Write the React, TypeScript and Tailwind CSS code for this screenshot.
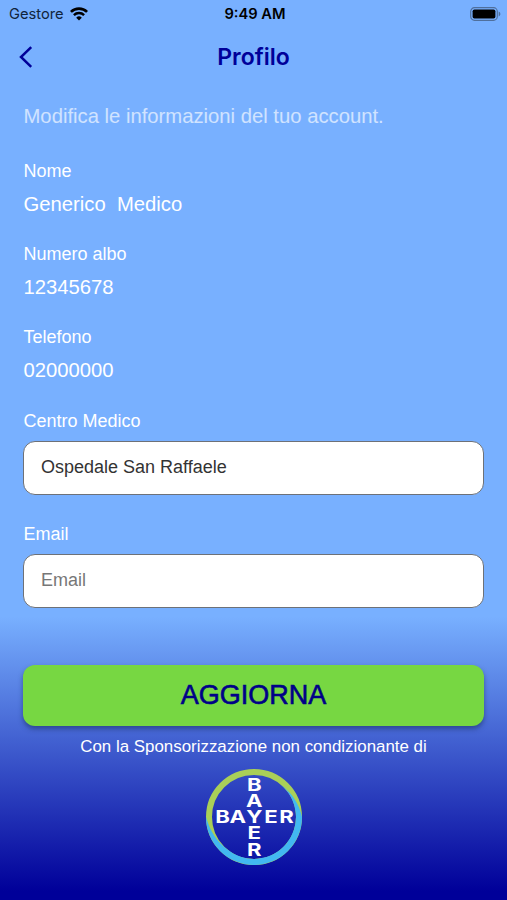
import React from "react";

interface Field {
  label: string;
  value: string;
}

const fields: Field[] = [
  { label: "Nome", value: "Generico  Medico" },
  { label: "Numero albo", value: "12345678" },
  { label: "Telefono", value: "02000000" },
];

const WifiIcon: React.FC = () => (
  <svg className="ml-[6px] h-[14px] w-[18px]" viewBox="0 0 18 14" fill="none" stroke="#000">
    <path d="M0.9 4.9a11.5 11.5 0 0 1 16.2 0" strokeWidth="2.7" />
    <path d="M3.9 8.1a7.2 7.2 0 0 1 10.2 0" strokeWidth="2.4" />
    <path d="M9 13.6 6.2 10.7a4 4 0 0 1 5.6 0z" fill="#000" stroke="none" />
  </svg>
);

const BatteryIcon: React.FC = () => (
  <svg className="h-[14px] w-[31px]" viewBox="0 0 31 14">
    <rect x="0.7" y="0.7" width="26.6" height="12.6" rx="3.8" fill="none" stroke="#4f6f9c" strokeWidth="1.2" />
    <rect x="2.6" y="2.4" width="22.8" height="9.2" rx="1.8" fill="#000" />
    <path d="M28.7 4.6c2.2.8 2.2 4 0 4.8z" fill="#4f6f9c" />
  </svg>
);

const logoLetters = [
  { char: "B", x: -31.5, y: -26 },
  { char: "A", x: -16.3, y: -10 },
  { char: "Y", x: 0.3, y: 6 },
  { char: "E", x: 17, y: 22 },
  { char: "R", x: 32.5, y: 38.7 },
];

// Croix Bayer : anneau vert et bleu, lettres horizontales et verticales
const BayerLogo: React.FC = () => (
  <svg
    className="h-24 w-24"
    viewBox="-48 -48 96 96"
    fill="#fff"
    fontFamily="Inter, sans-serif"
    fontWeight="700"
    fontSize="17.3"
    textAnchor="middle"
  >
    <circle r="45" fill="none" stroke="#a9cf58" strokeWidth="6" />
    <path
      d="M27 -32.2C38 -24 45 -13 48 0A48 48 0 0 1 -48 0C-44 14 -37 25 -27 32.2A42 42 0 0 0 27 -32.2Z"
      fill="#42b8f1"
    />
    {logoLetters.map(({ char, x, y }) => (
      <g key={char}>
        <text transform={`translate(0.3 ${y}) scale(1.28 1)`}>{char}</text>
        {char !== "Y" && <text transform={`translate(${x} 6) scale(1.28 1)`}>{char}</text>}
      </g>
    ))}
  </svg>
);

const InputBox: React.FC<{ label: string; value?: string; placeholder?: string }> = (props) => (
  <label className="flex flex-col gap-2">
    <span className="pl-[0.5px] text-[18px] leading-6">{props.label}</span>
    <input
      className="h-[54px] w-full rounded-xl border border-[#6d7178] bg-white px-[17px] pb-px text-[18px] text-[#333] outline-none placeholder:text-[#777]"
      defaultValue={props.value}
      placeholder={props.placeholder}
    />
  </label>
);

export default function App() {
  return (
    <div className="flex h-[900px] w-[507px] flex-col overflow-hidden bg-[linear-gradient(to_bottom,#78b0ff_68.5%,#000099_99%)] font-['Liberation_Sans',Arial,sans-serif] text-white">
      <div className="grid h-7 grid-cols-3 items-center pr-[6px] pl-[9px] font-[Inter,sans-serif] text-black">
        <div className="flex items-center text-[14.7px]">
          <span className="text-[#10243c]">Gestore</span>
          <WifiIcon />
        </div>
        <span className="text-center text-[14.7px] font-semibold">9:49 AM</span>
        <div className="flex justify-end">
          <BatteryIcon />
        </div>
      </div>

      <header className="grid h-[58px] grid-cols-[60px_1fr_60px] items-center">
        <button className="pl-[19px]" aria-label="Indietro">
          <svg className="h-[22px] w-[14px]" viewBox="0 0 14 22" fill="none" stroke="#000099" strokeWidth="2.5">
            <path d="M12.2 1.2 2 11l10.2 9.8" />
          </svg>
        </button>
        <h1 className="text-center font-[Inter,sans-serif] text-[23px] font-semibold text-[#000099]">Profilo</h1>
      </header>

      <main className="flex flex-col px-[23px] pt-4">
        <p className="pl-[0.5px] text-[20.25px] leading-7 text-white/65">Modifica le informazioni del tuo account.</p>

        <div className="mt-[29px] flex flex-col gap-6 pl-[0.5px]">
          {fields.map((field) => (
            <div key={field.label} className="flex flex-col gap-[7px]">
              <span className="text-[18px] leading-6">{field.label}</span>
              <span className="text-[20.25px] leading-7 whitespace-pre">{field.value}</span>
            </div>
          ))}
        </div>

        <div className="mt-[25px] flex flex-col gap-[27px]">
          <InputBox label="Centro Medico" value="Ospedale San Raffaele" />
          <InputBox label="Email" placeholder="Email" />
        </div>

        <button className="mt-[57px] h-[60.5px] rounded-xl bg-[#77d742] text-[27px] text-[#000088] shadow-[0_3px_5px_rgba(20,40,80,0.5)] [-webkit-text-stroke:0.6px_#000088]">
          AGGIORNA
        </button>
      </main>

      <footer className="mt-[9.5px] flex flex-col items-center gap-[9.5px]">
        <p className="text-[16.9px] leading-6">Con la Sponsorizzazione non condizionante di</p>
        <BayerLogo />
      </footer>
    </div>
  );
}
